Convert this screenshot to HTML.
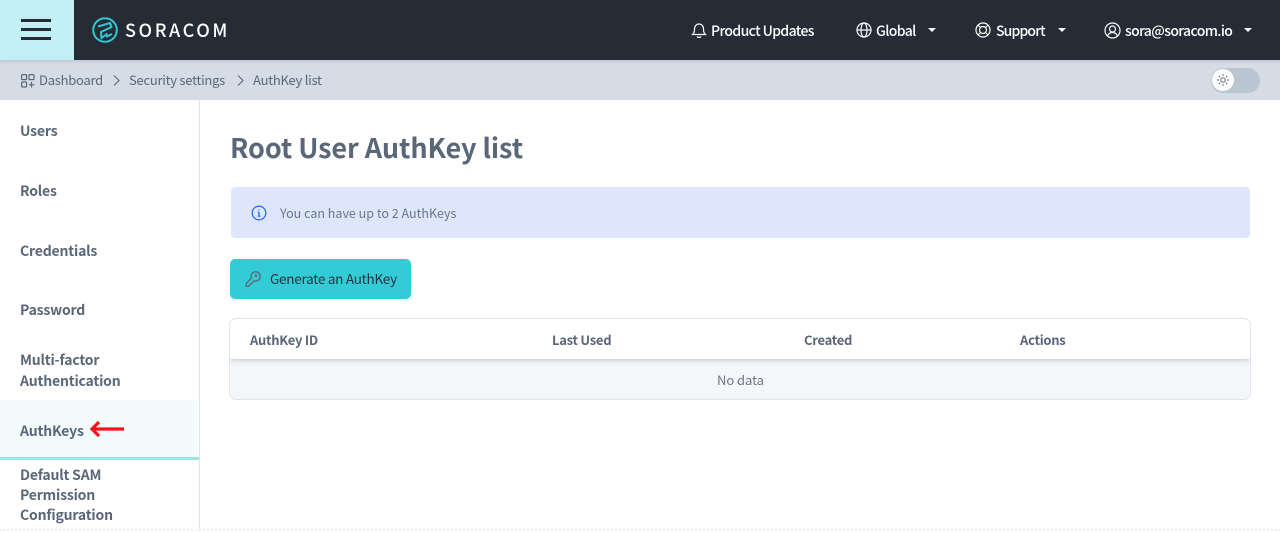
<!DOCTYPE html>
<html><head><meta charset="utf-8"><style>
*{box-sizing:border-box}
html,body{margin:0;padding:0;width:1280px;height:533px;overflow:hidden;background:#fff;font-family:"Noto Sans CJK JP","Liberation Sans",sans-serif}
.a{position:absolute;white-space:nowrap;line-height:20px}
svg{position:absolute;fill:none}
.nav{color:#fff;font-size:14px;font-weight:500;letter-spacing:-.62px}
.side{color:#5a6779;font-size:14px;font-weight:700;left:20px;letter-spacing:-.18px}
.bc{color:#5a6779;font-size:13px;letter-spacing:-.25px}
.th{color:#5a6779;font-size:13px;font-weight:700;top:330px;letter-spacing:-.27px}
.car{position:absolute;width:0;height:0;border-left:4.5px solid transparent;border-right:4.5px solid transparent;border-top:4.5px solid #fff;top:28px}
</style></head><body>
<div class="a" style="left:0;top:0;width:1280px;height:60px;background:#252c36"></div>
<div class="a" style="left:0;top:0;width:74px;height:60px;background:#c3f0f5"></div>
<div class="a" style="left:21px;top:19px;width:30px;height:3px;background:#252c36"></div>
<div class="a" style="left:21px;top:28px;width:30px;height:3px;background:#252c36"></div>
<div class="a" style="left:21px;top:37px;width:30px;height:3px;background:#252c36"></div>
<svg style="left:91px;top:16px" width="28" height="28" viewBox="0 0 28 28" stroke="#2fc8d4" stroke-width="2"><circle cx="14" cy="14" r="11.8"/><path d="M7 10.500L19 7l1.500 4L10 16l.5 6 6-4.500M15 21l6-3"/></svg>
<div class="a" style="left:125px;top:19px;color:#fff;font-size:18px;font-weight:500;letter-spacing:2.6px;line-height:22px">SORACOM</div>

<svg style="left:691px;top:22px" width="16" height="17" viewBox="0 0 16 17" stroke="#fff" stroke-width="1.2"><path d="M1.500 12.500c1.500-1.500 2-2.500 2-5.500 0-3 2-5 4.500-5s4.500 2 4.500 5c0 3 .5 4 2 5.500zM6 14.500c.5 1.200 3.500 1.200 4 0"/></svg>
<div class="a nav" style="left:711px;top:21px">Product Updates</div>
<svg style="left:856px;top:22px" width="16" height="16" viewBox="0 0 16 16" stroke="#fff" stroke-width="1.200"><circle cx="8" cy="8" r="7"/><ellipse cx="8" cy="8" rx="3" ry="7"/><path d="M1 8h14"/></svg>
<div class="a nav" style="left:876px;top:21px">Global</div><div class="car" style="left:928px"></div>
<svg style="left:975px;top:22px" width="16" height="16" viewBox="0 0 16 16" stroke="#fff" stroke-width="1.200"><circle cx="8" cy="8" r="7"/><circle cx="8" cy="8" r="3.500"/><path d="M3 3l2.500 2.500M13 3l-2.500 2.500M3 13l2.500-2.500M13 13l-2.500-2.500"/></svg>
<div class="a nav" style="left:996px;top:21px;letter-spacing:-.85px">Support</div><div class="car" style="left:1058px"></div>
<svg style="left:1104px;top:22px" width="17" height="17" viewBox="0 0 17 17" stroke="#fff" stroke-width="1.200"><circle cx="8.500" cy="8.500" r="7.500"/><circle cx="8.500" cy="7" r="3"/><path d="M3.500 14c1-2.500 2.500-3.500 5-3.500s4 1 5 3.500"/></svg>
<div class="a nav" style="left:1125px;top:21px">sora@soracom.io</div><div class="car" style="left:1244px"></div>

<div class="a" style="left:0;top:60px;width:1280px;height:40px;background:#d5dce6;box-shadow:inset 0 3px 3px -2px rgba(37,44,54,.18)"></div>
<svg style="left:21px;top:74px" width="14" height="14" viewBox="0 0 14 14" stroke="#5a6779" stroke-width="1.200"><rect x=".6" y=".6" width="5" height="5" rx="1"/><rect x="8" y=".6" width="5" height="5" rx="1"/><rect x=".6" y="8" width="5" height="5" rx="1"/><path d="M10.500 8v5.500M8 10.800h5.500"/></svg>
<div class="a bc" style="left:39px;top:70px">Dashboard</div>
<svg style="left:112px;top:74px" width="9" height="13" viewBox="0 0 9 13" stroke="#5a6779" stroke-width="1.100"><path d="M2 1.500l5 5-5 5"/></svg>
<div class="a bc" style="left:129px;top:70px">Security settings</div>
<svg style="left:236px;top:74px" width="9" height="13" viewBox="0 0 9 13" stroke="#5a6779" stroke-width="1.100"><path d="M2 1.500l5 5-5 5"/></svg>
<div class="a bc" style="left:253px;top:70px">AuthKey list</div>
<div class="a" style="left:1211px;top:68px;width:49px;height:25px;border-radius:13px;background:#b9c5d1"></div>
<div class="a" style="left:1212px;top:69px;width:22px;height:22px;border-radius:50%;background:#fff"></div>
<svg style="left:1216px;top:73px" width="14" height="14" viewBox="0 0 14 14" stroke="#5a6779" stroke-width="1"><circle cx="7" cy="7" r="2.200"/><path d="M7 1v2M7 11v2M1 7h2M11 7h2M2.800 2.800l1.400 1.400M9.800 9.800l1.400 1.400M2.800 11.200l1.400-1.400M9.800 4.200l1.400-1.400"/></svg>

<div class="a" style="left:199px;top:100px;width:1px;height:429px;background:#dfe4ea"></div>
<div class="a side" style="top:121px">Users</div>
<div class="a side" style="top:181px">Roles</div>
<div class="a side" style="top:241px">Credentials</div>
<div class="a side" style="top:300px">Password</div>
<div class="a side" style="top:350px;line-height:21px">Multi-factor<br>Authentication</div>
<div class="a" style="left:0;top:400px;width:199px;height:60px;background:#f3fbfc;border-bottom:3px solid #98e7ea"></div>
<div class="a side" style="top:421px">AuthKeys</div>
<svg style="left:89px;top:420px" width="35" height="18" viewBox="0 0 35 18" stroke="#f5131b" stroke-width="3.200"><path d="M35 9H3M10 2L3 9l7 7"/></svg>
<div class="a side" style="top:465px">Default SAM<br>Permission<br>Configuration</div>
<div class="a" style="left:0;top:529px;width:1280px;height:0;border-top:2px dotted #eceef0"></div>

<div class="a" style="left:230px;top:129px;font-size:27px;font-weight:700;color:#5a6779;line-height:36px;letter-spacing:-.08px">Root User AuthKey list</div>
<div class="a" style="left:231px;top:187px;width:1019px;height:51px;background:#dde6fd;border-radius:4px"></div>
<svg style="left:251px;top:205px" width="16" height="16" viewBox="0 0 16 16" stroke="#2e6ff2" stroke-width="1.300"><circle cx="8" cy="8" r="6.800"/><path d="M8 7.200v4M6.800 11.200h2.400M6.800 7.200H8M8 4.500v1" stroke-width="1.400"/></svg>
<div class="a" style="left:280px;top:203px;color:#6b7686;font-size:12.500px;letter-spacing:.01px">You can have up to 2 AuthKeys</div>
<div class="a" style="left:230px;top:259px;width:181px;height:40px;background:#33cbd6;border-radius:5px"></div>
<svg style="left:245px;top:271px" width="16" height="17" viewBox="0 0 16 17" stroke="#5b6c7a" stroke-width="1.400"><path d="M6.300 6.800a4.600 4.600 0 1 1 3 3L3.500 15.300H1.200v-2.600z"/><circle cx="11" cy="4.700" r=".6"/></svg>
<div class="a" style="left:270px;top:268px;color:#22343f;font-size:13.500px;letter-spacing:-.26px">Generate an AuthKey</div>

<div class="a" style="left:229px;top:318px;width:1022px;height:82px;border:1px solid #dfe4ea;border-radius:7px;background:#f5f6f9;overflow:hidden">
<div style="height:40px;background:#fff;box-shadow:0 1px 6px rgba(80,95,115,.32)"></div></div>
<div class="a th" style="left:250px">AuthKey ID</div>
<div class="a th" style="left:552px">Last Used</div>
<div class="a th" style="left:804px">Created</div>
<div class="a th" style="left:1020px">Actions</div>
<div class="a" style="left:717px;top:370px;color:#6b7686;font-size:13px;letter-spacing:-.05px">No data</div>
</body></html>
